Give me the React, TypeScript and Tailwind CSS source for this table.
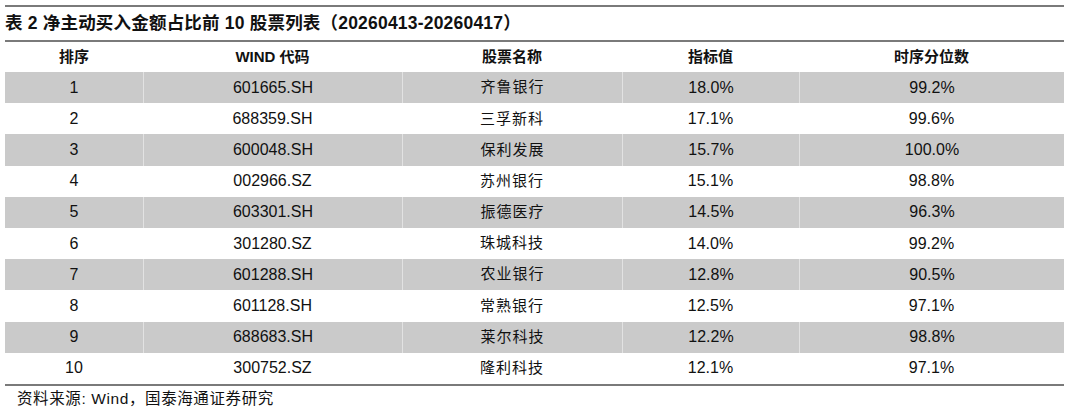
import React from 'react';

const rows = [
  ['1', '601665.SH', '齐鲁银行', '18.0%', '99.2%'],
  ['2', '688359.SH', '三孚新科', '17.1%', '99.6%'],
  ['3', '600048.SH', '保利发展', '15.7%', '100.0%'],
  ['4', '002966.SZ', '苏州银行', '15.1%', '98.8%'],
  ['5', '603301.SH', '振德医疗', '14.5%', '96.3%'],
  ['6', '301280.SZ', '珠城科技', '14.0%', '99.2%'],
  ['7', '601288.SH', '农业银行', '12.8%', '90.5%'],
  ['8', '601128.SH', '常熟银行', '12.5%', '97.1%'],
  ['9', '688683.SH', '莱尔科技', '12.2%', '98.8%'],
  ['10', '300752.SZ', '隆利科技', '12.1%', '97.1%'],
];

const headers = ['排序', 'WIND 代码', '股票名称', '指标值', '时序分位数'];
const cols = 'grid grid-cols-[138px_259px_220px_177px_265px]';

export default function App() {
  return (
    <div
      className="w-[1070px] h-[413px] bg-white text-[#111] overflow-hidden"
      style={{ fontFamily: '"Liberation Sans", Arial, "Noto Sans CJK SC", sans-serif' }}
    >
      <div className="ml-[5px] w-[1059px] pt-[5px]">
        <div className="border-t-2 border-[#7a7a7a]" />
        <div className="h-[33px] flex items-center text-[17.5px] font-bold tracking-[0.2px]">
          表 2 净主动买入金额占比前 10 股票列表（20260413-20260417）
        </div>
        <div className="border-t-2 border-[#7a7a7a]" />
        <div className={`${cols} h-[30px] items-center text-[15px] font-bold`}>
          {headers.map((h, i) => (
            <div key={i} className="text-center">
              {h}
            </div>
          ))}
        </div>
        {rows.map((r, ri) => (
          <div
            key={ri}
            className={`${cols} h-[31.2px] text-[16px] ${ri % 2 === 0 ? 'bg-[#cacaca]' : 'bg-white'}`}
          >
            {r.map((c, ci) => (
              <div
                key={ci}
                className={`flex items-center justify-center ${
                  ci > 0 && ri % 2 === 0 ? 'border-l border-[#e2e2e2]' : ''
                } ${ci === 2 ? 'tracking-[1px] text-[15px]' : ''}`}
              >
                {c}
              </div>
            ))}
          </div>
        ))}
        <div className="border-t-2 border-[#7a7a7a]" />
        <div className="pl-[12px] h-[26px] flex items-center text-[15.5px] tracking-[0.6px]">
          资料来源: Wind，国泰海通证券研究
        </div>
      </div>
    </div>
  );
}
